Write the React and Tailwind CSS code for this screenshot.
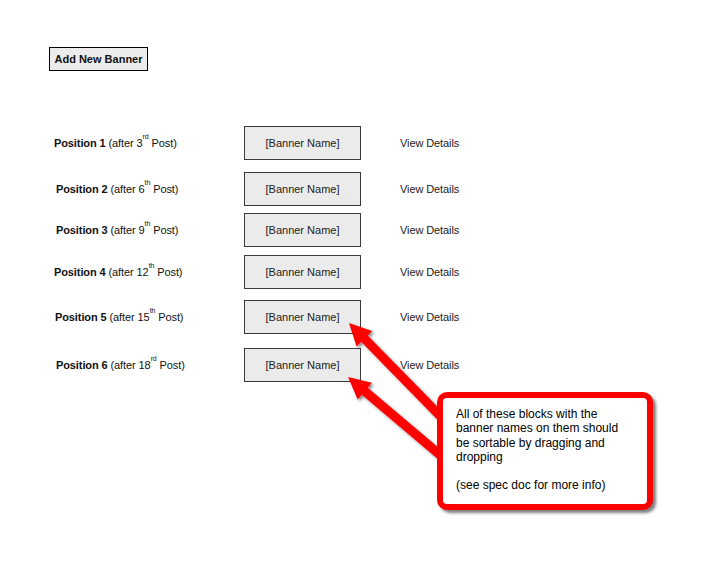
import React from 'react';

const rows = [
  { n: 1, ord: '3', sup: 'rd', mt: 'mt-[55px]', pl: 'pl-0' },
  { n: 2, ord: '6', sup: 'th', mt: 'mt-[12px]', pl: 'pl-[2px]' },
  { n: 3, ord: '9', sup: 'th', mt: 'mt-[7px]', pl: 'pl-[2px]' },
  { n: 4, ord: '12', sup: 'th', mt: 'mt-[8px]', pl: 'pl-0' },
  { n: 5, ord: '15', sup: 'th', mt: 'mt-[11px]', pl: 'pl-[1px]' },
  { n: 6, ord: '18', sup: 'rd', mt: 'mt-[14px]', pl: 'pl-[2px]' },
];

// arrow polygon from tip (tx,ty) back to tail (sx,sy)
const arrowPoints = (tx, ty, sx, sy) => {
  const dx = sx - tx, dy = sy - ty;
  const len = Math.hypot(dx, dy);
  const ux = dx / len, uy = dy / len;
  const px = -uy, py = ux;
  const head = 22, hw = 11, sw = 4.5;
  const bx = tx + ux * head, by = ty + uy * head;
  const pts = [
    [tx, ty],
    [bx + px * hw, by + py * hw],
    [bx + px * sw, by + py * sw],
    [sx + px * sw, sy + py * sw],
    [sx - px * sw, sy - py * sw],
    [bx - px * sw, by - py * sw],
    [bx - px * hw, by - py * hw],
  ];
  return pts.map(p => p.join(',')).join(' ');
};

const Row = ({ n, ord, sup, mt, pl }) => (
  <div className={`flex items-center h-[34px] ${mt}`}>
    <div className={`w-[190px] text-[11px] tracking-[-0.1px] text-[#111] ${pl}`}>
      <span className="font-bold">Position {n}</span> (after {ord}
      <sup className="text-[7px] align-super">{sup}</sup> Post)
    </div>
    <div className="w-[117px] h-[34px] border border-[#3a3a3a] bg-[#ebebeb] flex items-center justify-center text-[11px] text-[#222]">
      [Banner Name]
    </div>
    <div className="ml-[39px] text-[11px] tracking-[-0.1px] text-[#222]">View Details</div>
  </div>
);

export default function App() {
  return (
    <div className="relative w-[708px] h-[578px] bg-white overflow-hidden" style={{ fontFamily: '"Liberation Sans", Arial, sans-serif' }}>
      <div className="pt-[47px] pl-[49px]">
        <button className="block w-[99px] h-[24px] border border-black bg-[#ececec] text-[11px] font-bold text-[#111]">
          Add New Banner
        </button>
      </div>
      <div className="pl-[54px]">
        {rows.map(r => <Row key={r.n} {...r} />)}
      </div>

      <svg className="absolute left-0 top-0" width="708" height="578">
        <defs>
          <filter id="sh" x="-20%" y="-20%" width="140%" height="140%">
            <feDropShadow dx="2" dy="2" stdDeviation="1.5" floodColor="#000" floodOpacity="0.45" />
          </filter>
        </defs>
        <polygon points={arrowPoints(349, 323, 452, 428)} fill="#ff0000" filter="url(#sh)" />
        <polygon points={arrowPoints(348, 377, 452, 465)} fill="#ff0000" filter="url(#sh)" />
      </svg>

      <div className="absolute left-[437px] top-[392px] w-[216px] h-[118px] border-[6px] border-[#ff0000] rounded-[10px] bg-white shadow-[3px_3px_3px_rgba(0,0,0,0.5)] pl-[13px] pt-[9px] text-[12px] leading-[14.3px] text-black">
        <p>All of these blocks with the<br />banner names on them should<br />be sortable by dragging and<br />dropping</p>
        <p className="mt-[14.3px]">(see spec doc for more info)</p>
      </div>
    </div>
  );
}
